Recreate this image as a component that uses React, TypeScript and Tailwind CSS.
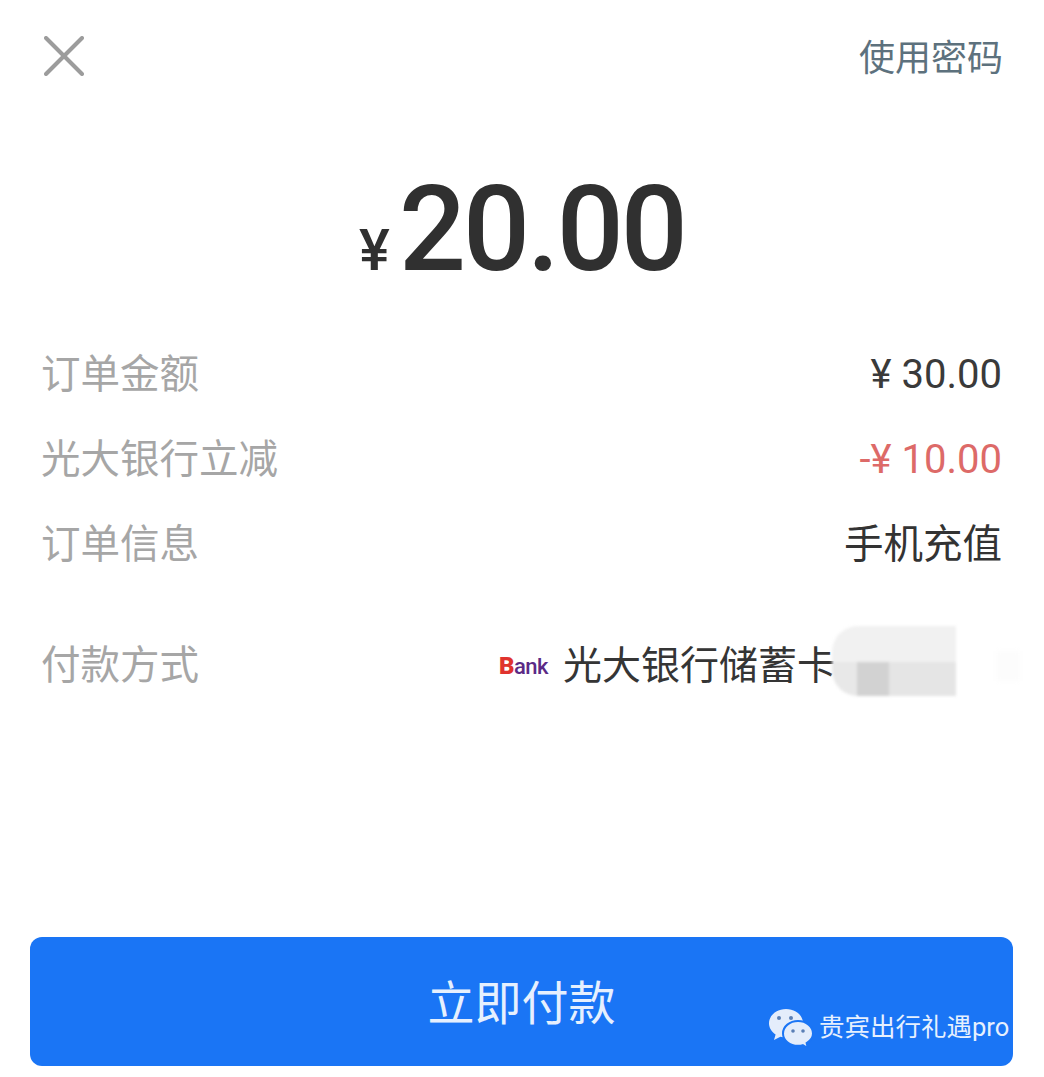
const cjk = "font-['Roboto','Noto_Sans_CJK_SC',sans-serif]"

const rows = [
  { label: "订单金额", value: "¥ 30.00", color: "text-[#3a3a3a]", size: "text-[40px]" },
  { label: "光大银行立减", value: "-¥ 10.00", color: "text-[#dd6a68]", size: "text-[40px]" },
  { label: "订单信息", value: "手机充值", color: "text-[#333333]", size: "text-[39.500px]" },
]

function CloseIcon() {
  return (
    <svg width="40" height="40" viewBox="0 0 40 40" fill="none" stroke="#9c9c9c" strokeWidth="4" strokeLinecap="round">
      <path d="M2 2 L38 38" />
      <path d="M38 2 L2 38" />
    </svg>
  )
}

function WechatIcon() {
  return (
    <svg width="46" height="40" viewBox="0 0 46 40">
      <path d="M18 1C8.6 1 1 7.4 1 15.2c0 4.6 2.6 8.6 6.6 11.2L6 32l6.4-3.2c1.8.5 3.7.8 5.6.8 9.4 0 17-6.4 17-14.4S27.400 1 18 1z" fill="#e4edfb" />
      <path d="M30 13c-8.300 0-15 5.500-15 12.400S21.700 37.800 30 37.800c1.700 0 3.300-.2 4.800-.7l5 2.900-1.200-5c3.800-2.300 6.400-5.600 6.400-9.600C45 18.500 38.300 13 30 13z" fill="#e4edfb" stroke="#1a75f5" strokeWidth="2" />
      <circle cx="11" cy="10" r="2" fill="#5a7fb5" />
      <circle cx="23" cy="10" r="2" fill="#5a7fb5" />
      <circle cx="25" cy="23" r="1.800" fill="#5a7fb5" />
      <circle cx="35" cy="23" r="1.800" fill="#5a7fb5" />
    </svg>
  )
}

function BlurredCard() {
  return (
    <div className="flex h-[70px] w-[124px] flex-col overflow-hidden rounded-l-[26px] blur-[1.5px]">
      <div className="h-[36px] bg-[#f1f1f1]" />
      <div className="flex h-[34px]">
        <div className="w-[25px] bg-[#e8e8e8]" />
        <div className="w-[32px] bg-[#d2d2d2]" />
        <div className="w-[67px] bg-[#e5e5e5]" />
      </div>
    </div>
  )
}

export default function App() {
  return (
    <div className={`flex h-[1077px] w-[1044px] flex-col bg-white ${cjk}`}>
      <div className="flex items-start justify-between pl-[44px] pr-[41px] pt-[36px]">
        <CloseIcon />
        <span className="mt-[1px] text-[36px] leading-[44px] text-[#5d717d]">使用密码</span>
      </div>

      <div className="mt-[88px] flex items-baseline justify-center text-[#303030]">
        <span className="mr-[9px] text-[58px] font-medium leading-none">¥</span>
        <span className="text-[118px] font-medium leading-[122px] tracking-[-3px]">20.00</span>
      </div>

      <div className="mt-[59px] flex flex-col gap-[35px] px-[42px]">
        {rows.map((row) => (
          <div key={row.label} className="flex h-[50px] items-center justify-between">
            <span className="-ml-[1px] text-[39.500px] leading-[50px] text-[#a6a6a6]">{row.label}</span>
            <span className={`${row.size} leading-[50px] ${row.color}`}>{row.value}</span>
          </div>
        ))}
      </div>

      <div className="mt-[66px] flex items-center justify-between pl-[42px] pr-[24px]">
        <span className="-ml-[1px] text-[39.500px] leading-[50px] text-[#a6a6a6]">付款方式</span>
        <div className="flex items-center">
          <span className="mr-[15px] text-[22px] font-medium leading-none tracking-[-0.5px] text-[#5b2a86]">
            <span className="text-[24px] font-black text-[#e0332e]">B</span>ank
          </span>
          <span className="text-[39px] leading-[50px] text-[#353535]">光大银行储蓄卡</span>
          <div className="-mt-[10px] -ml-[4px]">
            <BlurredCard />
          </div>
          <div className="ml-[40px] h-[30px] w-[24px] bg-[#fcfcfc] blur-[2px]" />
        </div>
      </div>

      <div className="relative ml-[30px] mr-[31px] mt-auto mb-[11px] flex h-[129px] items-center justify-center rounded-[12px] bg-[#1a75f5]">
        <span className="pt-[4px] text-[47px] leading-none text-[#e6f0fe]">立即付款</span>
        <div className="absolute left-[738px] top-[71px] flex items-center gap-[5px]">
          <WechatIcon />
          <span className="whitespace-nowrap text-[25.500px] leading-none text-[#e6f0fe]">贵宾出行礼遇pro</span>
        </div>
      </div>
    </div>
  )
}
